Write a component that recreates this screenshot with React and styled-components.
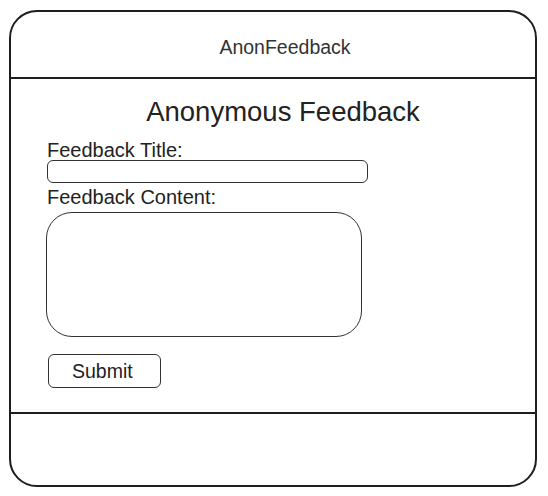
import React from 'react';
import styled, { createGlobalStyle } from 'styled-components';

const GlobalStyle = createGlobalStyle`
  body {
    margin: 0;
    background-color: #fff;
    font-family: "Liberation Sans", Arial, sans-serif;
  }
`;

const Frame = styled.div`
  box-sizing: border-box;
  margin: 10px 0 0 9px;
  width: 528px;
  height: 477px;
  border: 2px solid #1e1e1e;
  border-radius: 28px;
  display: flex;
  flex-direction: column;
`;

const Header = styled.header`
  box-sizing: border-box;
  height: 67px;
  border-bottom: 2px solid #1e1e1e;
  display: flex;
  align-items: center;
  justify-content: center;
  padding: 6px 0 0 24px;
  font-size: 19.5px;
  color: #333;
`;

const Main = styled.main`
  flex: 1;
  padding: 17px 0 0 36px;
  display: flex;
  flex-direction: column;
  align-items: flex-start;
`;

const Title = styled.h1`
  align-self: stretch;
  margin: 0 0 12px;
  padding-right: 16px;
  text-align: center;
  font-size: 27.5px;
  font-weight: 400;
  line-height: 32px;
  color: #222;
`;

const Label = styled.label`
  font-size: 20px;
  line-height: 20px;
  color: #222;
`;

const TextInput = styled.div`
  box-sizing: border-box;
  width: 321px;
  height: 23px;
  margin-bottom: 4px;
  border: 1.5px solid #333;
  border-radius: 6px;
`;

const TextArea = styled.div`
  box-sizing: border-box;
  width: 316px;
  height: 125px;
  margin: 5px 0 17px -1px;
  border: 1px solid #333;
  border-radius: 26px;
`;

const Button = styled.button`
  box-sizing: border-box;
  width: 113px;
  height: 34px;
  margin-left: 1px;
  border: 1.5px solid #333;
  border-radius: 6px;
  background: #fff;
  font-family: inherit;
  font-size: 19.5px;
  color: #222;
  text-align: left;
  padding: 0 0 0 23px;
`;

const Footer = styled.footer`
  height: 71px;
  border-top: 2px solid #1e1e1e;
`;

export default function App() {
  return (
    <>
      <GlobalStyle />
      <Frame>
        <Header>AnonFeedback</Header>
        <Main>
          <Title>Anonymous Feedback</Title>
          <Label>Feedback Title:</Label>
          <TextInput />
          <Label>Feedback Content:</Label>
          <TextArea />
          <Button>Submit</Button>
        </Main>
        <Footer />
      </Frame>
    </>
  );
}
